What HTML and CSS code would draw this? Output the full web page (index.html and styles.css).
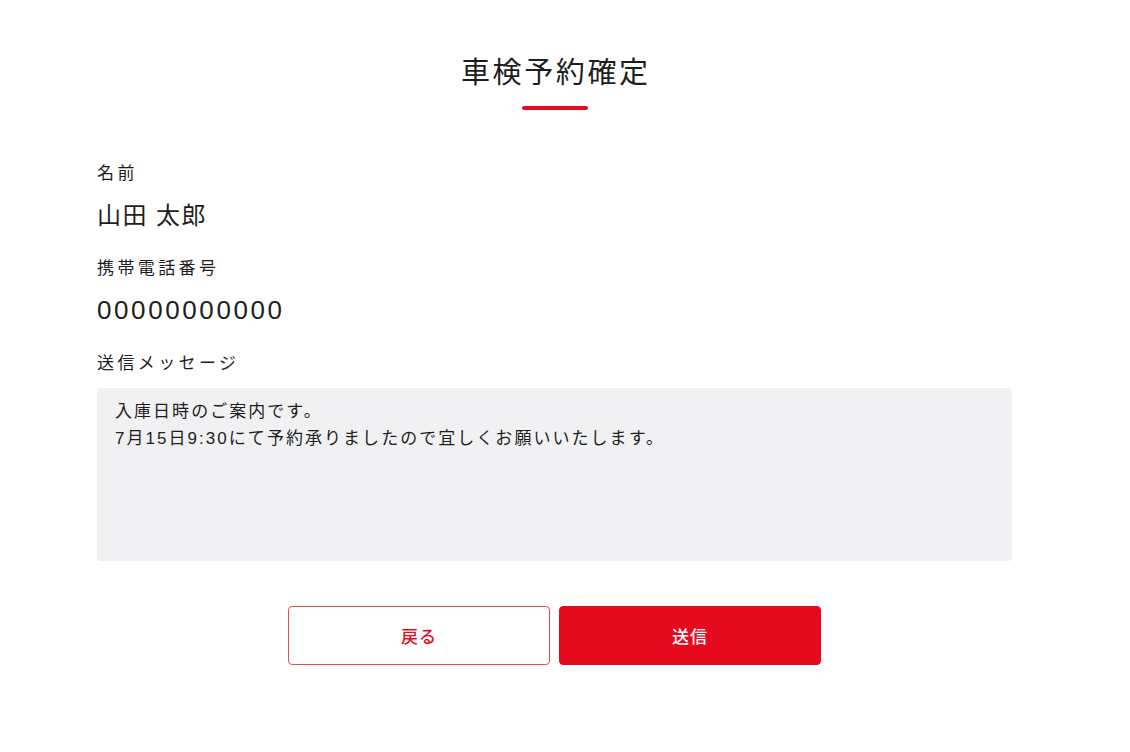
FILE: index.html
```html
<!DOCTYPE html>
<html lang="ja">
<head>
<meta charset="utf-8">
<title>車検予約確定</title>
<link rel="stylesheet" href="styles.css">
</head>
<body>
<main class="page">
  <header class="head">
    <h1 class="title">車検予約確定</h1>
    <span class="title-bar"></span>
  </header>
  <section class="fields">
    <div class="field">
      <div class="label">名前</div>
      <div class="value value-name">山田 太郎</div>
    </div>
    <div class="field">
      <div class="label">携帯電話番号</div>
      <div class="value value-tel">00000000000</div>
    </div>
    <div class="field">
      <div class="label">送信メッセージ</div>
      <div class="message">入庫日時のご案内です。<br>7月15日9:30にて予約承りましたので宜しくお願いいたします。</div>
    </div>
  </section>
  <div class="actions">
    <button class="btn btn-back" type="button">戻る</button>
    <button class="btn btn-send" type="button">送信</button>
  </div>
</main>
</body>
</html>
```

FILE: styles.css
```css
* { box-sizing: border-box; }
html, body { margin: 0; padding: 0; background: #fff; }
body {
  font-family: "Liberation Sans", "Noto Sans CJK JP", sans-serif;
  color: #1e1e1e;
}
.page {
  width: 915px;
  margin-left: 97px;
  padding-top: 52px;
}
.head {
  display: flex;
  flex-direction: column;
  align-items: center;
}
.title {
  margin: 0;
  font-size: 29px;
  line-height: 42px;
  font-weight: 400;
  letter-spacing: 0.09em;
  text-indent: 0.09em;
}
.title-bar {
  display: block;
  width: 66px;
  height: 4px;
  border-radius: 2px;
  background: #e60a1f;
  margin-top: 12px;
}
.fields {
  margin-top: 50px;
  display: flex;
  flex-direction: column;
  gap: 23px;
}
.field { display: flex; flex-direction: column; }
.label {
  font-size: 17px;
  line-height: 27px;
  letter-spacing: 0.2em;
}
.value {
  margin-top: 12px;
  font-size: 24px;
  line-height: 33px;
  letter-spacing: 0.06em;
}
.value-tel {
  margin-top: 10px;
  font-size: 26px;
  line-height: 37px;
  letter-spacing: 0.1em;
}
.field:last-child { margin-top: -2px; }
.message {
  margin-top: 11px;
  height: 173px;
  background: #f1f1f3;
  border-radius: 4px;
  padding: 10px 18px;
  font-size: 17px;
  line-height: 27px;
  letter-spacing: 0.12em;
}
.actions {
  margin-top: 45px;
  display: flex;
  justify-content: center;
  gap: 9px;
}
.btn {
  width: 262px;
  height: 59px;
  border-radius: 4px;
  font-family: inherit;
  font-size: 17px;
  font-weight: 500;
  letter-spacing: 0.06em;
  border: 1px solid #e60a1f;
  cursor: pointer;
}
.btn-back { background: #fff; color: #e60a1f; border-color: #ea4a5a; }
.btn-send { background: #e60a1f; color: #fff; }
```
